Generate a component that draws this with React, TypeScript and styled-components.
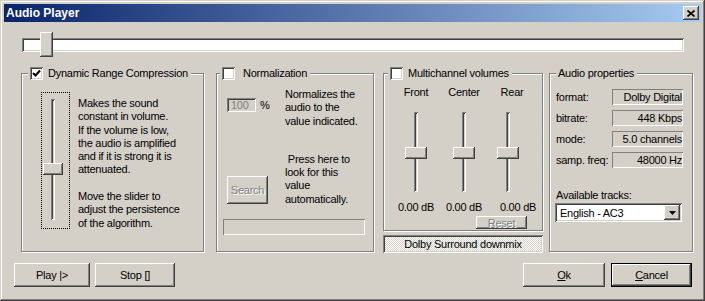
import React from "react";
import styled, { createGlobalStyle, css } from "styled-components";

const GlobalStyle = createGlobalStyle`
  html, body {
    margin: 0;
    padding: 0;
    background: #d4d0c8;
  }
  body {
    font-family: "Liberation Sans", Arial, sans-serif;
    font-size: 11px;
    letter-spacing: -0.25px;
    color: #000;
  }
`;

const raised = css`
  box-shadow: inset -1px -1px #404040, inset 1px 1px #fff,
    inset -2px -2px #808080, inset 2px 2px #d4d0c8;
`;

const sunken = css`
  box-shadow: inset 1px 1px #808080, inset -1px -1px #fff,
    inset 2px 2px #404040, inset -2px -2px #d4d0c8;
`;

const disabledText = css`
  color: #808080;
  text-shadow: 1px 1px 0 #fff;
`;

const Window = styled.div`
  width: 705px;
  height: 301px;
  box-sizing: border-box;
  padding: 4px;
  background: #d4d0c8;
  box-shadow: inset -1px -1px #404040, inset 1px 1px #d4d0c8,
    inset -2px -2px #808080, inset 2px 2px #fff;
  display: flex;
  flex-direction: column;
`;

const TitleBar = styled.div`
  height: 18px;
  display: flex;
  align-items: center;
  justify-content: space-between;
  padding: 0 2px 0 2px;
  background: linear-gradient(to right, #0a246a, #a6caf0);
`;

const TitleText = styled.span`
  color: #fff;
  font-weight: bold;
  font-size: 12px;
  letter-spacing: 0;
`;

const CloseButton = styled.div`
  width: 16px;
  height: 14px;
  background: #d4d0c8;
  ${raised};
  display: flex;
  align-items: center;
  justify-content: center;
`;

const SeekBar = styled.div`
  position: relative;
  width: 662px;
  height: 25px;
  margin: 10px 0 0 18px;
  display: flex;
  align-items: center;
`;

const SeekTrack = styled.div`
  width: 100%;
  height: 14px;
  background: #fff;
  ${sunken};
`;

const SeekThumb = styled.div`
  position: absolute;
  top: 0;
  width: 13px;
  height: 25px;
  background: #d4d0c8;
  ${raised};
`;

const Groups = styled.div`
  display: flex;
  align-items: flex-start;
  margin: 9px 0 0 17px;
`;

const Group = styled.fieldset<{ $w: number; $h: number; $ml?: number }>`
  box-sizing: border-box;
  width: ${(p) => p.$w}px;
  height: ${(p) => p.$h}px;
  margin: 0 0 0 ${(p) => p.$ml ?? 0}px;
  padding: 0;
  min-inline-size: 0;
  border: 1px solid #808080;
  box-shadow: inset 1px 1px #fff, 1px 1px #fff;
`;

const Legend = styled.legend<{ $x: number; $gap?: number }>`
  margin-left: ${(p) => p.$x}px;
  padding: 0 3px 0 2px;
  height: 14px;
  display: flex;
  align-items: center;
  gap: ${(p) => p.$gap ?? 5}px;
  background: #d4d0c8;
`;

const CheckBox = styled.span`
  width: 13px;
  height: 13px;
  box-sizing: border-box;
  background: #fff;
  ${sunken};
  display: flex;
  align-items: center;
  justify-content: center;
`;

const Column = styled.div`
  display: flex;
  flex-direction: column;
  margin-left: 9px;
`;

/* Dynamic range compression */
const DrcBody = styled.div`
  display: flex;
  align-items: flex-start;
  gap: 8px;
  padding: 12px 0 0 19px;
`;

const FocusFrame = styled.div`
  box-sizing: border-box;
  width: 29px;
  height: 137px;
  border: 1px dotted #000;
  padding: 6px 0 0 1px;
`;

const VSlider = styled.div<{ $w: number; $h: number }>`
  position: relative;
  width: ${(p) => p.$w}px;
  height: ${(p) => p.$h}px;
  display: flex;
  justify-content: center;
`;

const VGroove = styled.div`
  width: 4px;
  height: 100%;
  ${sunken};
`;

const VThumb = styled.div<{ $top: number }>`
  position: absolute;
  left: 0;
  right: 0;
  top: ${(p) => p.$top}px;
  height: 12px;
  background: #d4d0c8;
  ${raised};
`;

const Paragraph = styled.div<{ $mt?: number }>`
  margin-top: ${(p) => p.$mt ?? 0}px;
  line-height: 13.3px;
  white-space: pre;
`;

/* Normalization */
const NormBody = styled.div`
  display: flex;
  flex-direction: column;
  padding: 8px 0 0 6px;
`;

const NormRow = styled.div<{ $mt?: number }>`
  display: grid;
  grid-template-columns: 62px 1fr;
  margin-top: ${(p) => p.$mt ?? 0}px;
`;

const InputCell = styled.div<{ $mt: number; $align?: string }>`
  display: flex;
  align-items: center;
  gap: 4px;
  padding-left: 4px;
  margin-top: ${(p) => p.$mt}px;
  align-self: ${(p) => p.$align ?? "start"};
`;

const PercentInput = styled.div`
  box-sizing: border-box;
  width: 29px;
  height: 14px;
  padding-left: 4px;
  line-height: 14px;
  color: #808080;
  ${sunken};
`;

const Button = styled.div<{ $w: number; $h: number; $default?: boolean; $disabled?: boolean }>`
  box-sizing: border-box;
  width: ${(p) => p.$w}px;
  height: ${(p) => p.$h}px;
  background: #d4d0c8;
  ${raised};
  display: flex;
  align-items: center;
  justify-content: center;
  ${(p) => p.$disabled && disabledText};
  ${(p) =>
    p.$default &&
    css`
      border: 1px solid #000;
    `}
`;

const Progress = styled.div`
  width: 142px;
  height: 16px;
  margin-top: 13px;
  box-shadow: inset 1px 1px #808080, inset -1px -1px #fff;
`;

/* Multichannel */
const McBody = styled.div`
  display: flex;
  flex-direction: column;
  padding: 6px 0 0 8px;
`;

const Channels = styled.div`
  display: grid;
  grid-template-columns: repeat(3, 48px);
`;

const Channel = styled.div`
  display: flex;
  flex-direction: column;
  align-items: center;
  line-height: 13px;
  white-space: nowrap;
`;

const Shifted = styled.div<{ $dx: number }>`
  margin-left: ${(p) => Math.max(0, p.$dx * 2)}px;
  margin-right: ${(p) => Math.max(0, -p.$dx * 2)}px;
`;

const SliderSlot = styled(Shifted)`
  height: 102px;
  padding-top: 13px;
  box-sizing: border-box;
`;

const ResetRow = styled.div`
  display: flex;
  justify-content: flex-end;
  padding-right: 15px;
  margin-top: 2px;
`;

const Downmix = styled.div`
  box-sizing: border-box;
  width: 160px;
  height: 18px;
  margin-top: 4px;
  display: flex;
  align-items: center;
  justify-content: center;
  background: repeating-conic-gradient(#fff 0 25%, #d4d0c8 0 50%) 0 0 / 2px 2px;
  ${sunken};
`;

/* Audio properties */
const PropsBody = styled.div`
  display: flex;
  flex-direction: column;
  padding: 9px 0 0 6px;
`;

const PropGrid = styled.div`
  display: grid;
  grid-template-columns: 56px 71px;
  row-gap: 5px;
  align-items: center;
`;

const PropValue = styled.div`
  height: 16px;
  line-height: 16px;
  text-align: right;
  padding-right: 1px;
  box-sizing: border-box;
  white-space: nowrap;
  box-shadow: inset 1px 1px #808080, inset -1px -1px #fff;
`;

const TracksLabel = styled.div`
  margin-top: 20px;
  line-height: 14px;
`;

const Select = styled.div`
  box-sizing: border-box;
  width: 127px;
  height: 19px;
  margin: 1px 0 0 -1px;
  padding: 2px;
  background: #fff;
  ${sunken};
  display: flex;
  align-items: center;
  justify-content: space-between;
`;

const SelectText = styled.span`
  padding-left: 3px;
`;

const DropButton = styled.div`
  width: 16px;
  height: 15px;
  background: #d4d0c8;
  ${raised};
  display: flex;
  align-items: center;
  justify-content: center;
`;

/* Bottom buttons */
const Footer = styled.div`
  display: flex;
  justify-content: space-between;
  margin: 10px 9px 0 10px;
`;

const ButtonGroup = styled.div<{ $gap: number }>`
  display: flex;
  gap: ${(p) => p.$gap}px;
`;

const Key = styled.span`
  text-decoration: underline;
`;

const Check: React.FC<{ checked?: boolean }> = ({ checked }) => (
  <CheckBox>
    {checked && (
      <svg width="9" height="9" viewBox="0 0 9 9">
        <path d="M1 4 L3.5 6.5 L8 1.5" fill="none" stroke="#000" strokeWidth="2" />
      </svg>
    )}
  </CheckBox>
);

const channels = [
  { name: "Front", slider: 0, db: 0 },
  { name: "Center", slider: 0, db: 0 },
  { name: "Rear", slider: -4, db: 6 },
];

const properties = [
  ["format:", "Dolby Digital"],
  ["bitrate:", "448 Kbps"],
  ["mode:", "5.0 channels"],
  ["samp. freq:", "48000 Hz"],
];

const App: React.FC = () => {
  return (
    <>
      <GlobalStyle />
      <Window>
        <TitleBar>
          <TitleText>Audio Player</TitleText>
          <CloseButton>
            <svg width="8" height="7" viewBox="0 0 8 7">
              <path d="M0.5 0.5 L7.5 6.5 M7.5 0.5 L0.5 6.5" stroke="#000" strokeWidth="1.6" />
            </svg>
          </CloseButton>
        </TitleBar>

        <SeekBar>
          <SeekTrack />
          <SeekThumb style={{ left: 18 }} />
        </SeekBar>

        <Groups>
          <Group $w={183} $h={186}>
            <Legend $x={6}>
              <Check checked />
              Dynamic Range Compression
            </Legend>
            <DrcBody>
              <FocusFrame>
                <VSlider $w={20} $h={121}>
                  <VGroove />
                  <VThumb $top={64} />
                </VSlider>
              </FocusFrame>
              <Paragraph $mt={5}>
                {"Makes the sound\nconstant in volume.\nIf the volume is low,\nthe audio is amplified\nand if it is strong it is\nattenuated.\n\nMove the slider to\nadjust the persistence\nof the algorithm."}
              </Paragraph>
            </DrcBody>
          </Group>

          <Group $w={158} $h={186} $ml={12}>
            <Legend $x={3} $gap={8}>
              <Check />
              Normalization
            </Legend>
            <NormBody>
              <NormRow>
                <InputCell $mt={10}>
                  <PercentInput>100</PercentInput>
                  <span>%</span>
                </InputCell>
                <Paragraph>{"Normalizes the\naudio to the\nvalue indicated."}</Paragraph>
              </NormRow>
              <NormRow $mt={25}>
                <InputCell $mt={0} $align="end">
                  <Button $w={41} $h={28} $disabled style={{ marginBottom: 2 }}>
                    Search
                  </Button>
                </InputCell>
                <Paragraph>{" Press here to\nlook for this\nvalue\nautomatically."}</Paragraph>
              </NormRow>
              <Progress />
            </NormBody>
          </Group>

          <Column>
            <Group $w={160} $h={165}>
              <Legend $x={4}>
                <Check />
                Multichannel volumes
              </Legend>
              <McBody>
                <Channels>
                  {channels.map((ch) => (
                    <Channel key={ch.name}>
                      <span>{ch.name}</span>
                      <SliderSlot $dx={ch.slider}>
                        <VSlider $w={22} $h={80}>
                          <VGroove />
                          <VThumb $top={35} />
                        </VSlider>
                      </SliderSlot>
                      <Shifted $dx={ch.db}>0.00 dB</Shifted>
                    </Channel>
                  ))}
                </Channels>
                <ResetRow>
                  <Button $w={51} $h={13} $disabled>
                    Reset
                  </Button>
                </ResetRow>
              </McBody>
            </Group>
            <Downmix>Dolby Surround downmix</Downmix>
          </Column>

          <Group $w={144} $h={186} $ml={6}>
            <Legend $x={6}>Audio properties</Legend>
            <PropsBody>
              <PropGrid>
                {properties.map(([label, value]) => (
                  <React.Fragment key={label}>
                    <span>{label}</span>
                    <PropValue>{value}</PropValue>
                  </React.Fragment>
                ))}
              </PropGrid>
              <TracksLabel>Available tracks:</TracksLabel>
              <Select>
                <SelectText>English - AC3</SelectText>
                <DropButton>
                  <svg width="7" height="4" viewBox="0 0 7 4">
                    <path d="M0 0 H7 L3.5 4 Z" fill="#000" />
                  </svg>
                </DropButton>
              </Select>
            </PropsBody>
          </Group>
        </Groups>

        <Footer>
          <ButtonGroup $gap={5}>
            <Button $w={76} $h={24}>Play |&gt;</Button>
            <Button $w={80} $h={24}>Stop []</Button>
          </ButtonGroup>
          <ButtonGroup $gap={6}>
            <Button $w={82} $h={24}>
              <Key>O</Key>k
            </Button>
            <Button $w={81} $h={24} $default>
              <Key>C</Key>ancel
            </Button>
          </ButtonGroup>
        </Footer>
      </Window>
    </>
  );
};

export default App;
